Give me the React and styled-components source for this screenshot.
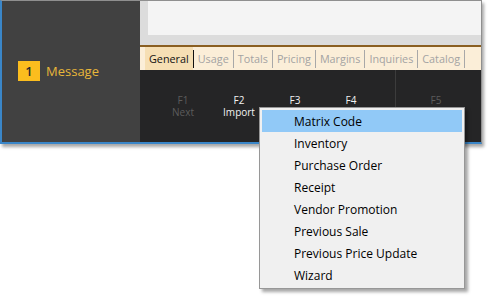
import React from "react";
import styled, { createGlobalStyle } from "styled-components";

const GlobalStyle = createGlobalStyle`
  html, body {
    margin: 0;
    padding: 0;
    background: #ffffff;
    font-family: "Open Sans", "Noto Sans", sans-serif;
  }
`;

const Page = styled.div`
  position: relative;
  width: 489px;
  height: 296px;
`;

const Window = styled.div`
  width: 479px;
  height: 141px;
  display: grid;
  grid-template-columns: 138px 1fr;
  border: 1px solid #8f8f8f;
  border-left: 2px solid #3a86c8;
  border-bottom: 2px solid #3a86c8;
  box-shadow: 2px 3px 3px rgba(0, 0, 0, 0.35);
`;

const SidePanel = styled.div`
  background: #414141;
  display: flex;
  align-items: center;
  gap: 6px;
  padding: 0 0 2px 16px;
`;

const Badge = styled.span`
  width: 22px;
  height: 20px;
  background: #fbbd1e;
  color: #2b2b2b;
  font-size: 13px;
  font-weight: 600;
  display: flex;
  align-items: center;
  justify-content: center;
`;

const SideLabel = styled.span`
  color: #e8b73a;
  font-size: 13px;
`;

const Main = styled.div`
  display: flex;
  flex-direction: column;
`;

const TopArea = styled.div`
  background: #dcdcdc;
  padding: 0 0 10px 8px;
`;

const Field = styled.div`
  height: 34px;
  background: #f4f4f4;
`;

const TabStrip = styled.div`
  border-top: 2px solid #8a5f22;
  background: #fbeed8;
  height: 23px;
  display: flex;
  align-items: stretch;
  padding: 0 0 0 5px;
`;

const Tab = styled.div`
  display: flex;
  align-items: center;
  padding: 0 4px;
  font-size: 10.8px;
  color: ${(p) => (p.$active ? "#111" : "#a3a3a3")};
  background: ${(p) => (p.$active ? "#f6dfb4" : "transparent")};
`;

const TabDivider = styled.span`
  width: 1px;
  margin: 3px 0 2px;
  background: ${(p) => (p.$dark ? "#111" : "#a8a8a8")};
`;

const KeyBar = styled.div`
  flex: 1;
  background: #252526;
  display: flex;
  padding-left: 15px;
`;

const KeyGroup = styled.div`
  display: flex;
`;

const Key = styled.div`
  width: 56px;
  padding-top: 24px;
  display: flex;
  flex-direction: column;
  align-items: center;
  font-size: 10px;
  line-height: 12px;
  color: ${(p) => (p.$enabled ? "#f2f2f2" : "#5c5c5c")};
`;

const KeySeparator = styled.div`
  width: 1px;
  margin-left: 16px;
  margin-right: 12px;
  background: #3c3c3c;
`;

const Menu = styled.ul`
  position: absolute;
  left: 259px;
  top: 107px;
  width: 200px;
  margin: 0;
  padding: 2px;
  list-style: none;
  background: #f0f0f0;
  border: 1px solid #979797;
  box-shadow: 3px 3px 3px rgba(0, 0, 0, 0.35);
  font-size: 12px;
`;

const MenuItem = styled.li`
  height: 22px;
  display: flex;
  align-items: center;
  padding-left: 32px;
  color: #000;
  background: ${(p) => (p.$hover ? "#91c9f7" : "transparent")};
`;

const tabs = ["General", "Usage", "Totals", "Pricing", "Margins", "Inquiries", "Catalog"];

const keys = [
  { code: "F1", label: "Next", enabled: false },
  { code: "F2", label: "Import", enabled: true },
  { code: "F3", label: "", enabled: true },
  { code: "F4", label: "", enabled: true },
];

const menuItems = [
  "Matrix Code",
  "Inventory",
  "Purchase Order",
  "Receipt",
  "Vendor Promotion",
  "Previous Sale",
  "Previous Price Update",
  "Wizard",
];

export default function App() {
  return (
    <Page>
      <GlobalStyle />
      <Window>
        <SidePanel>
          <Badge>1</Badge>
          <SideLabel>Message</SideLabel>
        </SidePanel>
        <Main>
          <TopArea>
            <Field />
          </TopArea>
          <TabStrip>
            {tabs.map((t, i) => (
              <React.Fragment key={t}>
                <Tab $active={i === 0}>{t}</Tab>
                <TabDivider $dark={i === 0} />
              </React.Fragment>
            ))}
          </TabStrip>
          <KeyBar>
            <KeyGroup>
              {keys.map((k) => (
                <Key key={k.code} $enabled={k.enabled}>
                  <span>{k.code}</span>
                  <span>{k.label}</span>
                </Key>
              ))}
            </KeyGroup>
            <KeySeparator />
            <Key>
              <span>F5</span>
            </Key>
          </KeyBar>
        </Main>
      </Window>
      <Menu>
        {menuItems.map((m, i) => (
          <MenuItem key={m} $hover={i === 0}>
            {m}
          </MenuItem>
        ))}
      </Menu>
    </Page>
  );
}
